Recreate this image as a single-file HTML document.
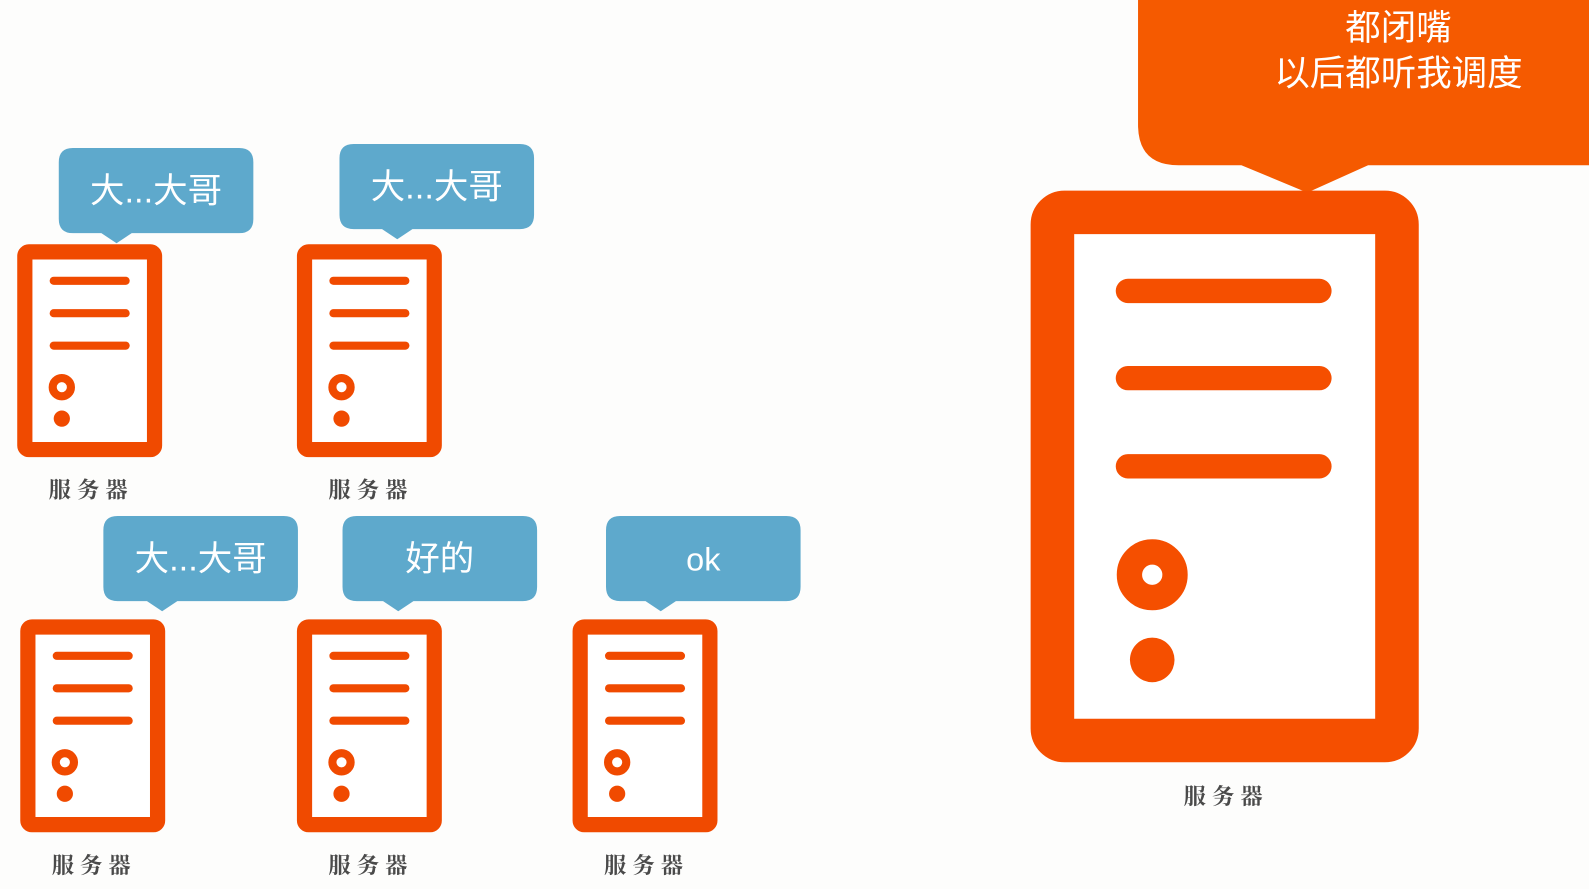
<!DOCTYPE html>
<html><head><meta charset="utf-8"><style>
html,body{margin:0;padding:0;background:#fdfdfc;width:1589px;height:889px;overflow:hidden}
svg{display:block}
.bt{font-family:"Liberation Sans","Noto Sans CJK SC",sans-serif;font-size:34px;fill:#fff;text-anchor:middle}
.lb{font-family:"Noto Serif CJK SC","Liberation Serif",serif;font-weight:bold;font-size:22px;fill:#4a4a4a;text-anchor:middle;letter-spacing:6px}
</style></head><body>
<svg width="1589" height="889" viewBox="0 0 1568 877" preserveAspectRatio="none" xmlns="http://www.w3.org/2000/svg">
<defs>
<g id="srv">
<rect x="7.5" y="7.5" width="128" height="195" rx="4" fill="#fff" stroke="#f04a00" stroke-width="15"/>
<g stroke="#f04a00" stroke-width="8" stroke-linecap="round">
<line x1="36" y1="36" x2="107" y2="36"/><line x1="36" y1="68" x2="107" y2="68"/><line x1="36" y1="100" x2="107" y2="100"/>
</g>
<circle cx="44" cy="141" r="9" fill="none" stroke="#f04a00" stroke-width="8"/>
<circle cx="44" cy="172" r="8" fill="#f04a00"/>
</g>
</defs>
<path d="M1123 0 H1568 V163 H1350 L1290 190 L1225 163 H1163 Q1123 163 1123 123 Z" fill="#f55a00"/>
<text x="1380" y="39" class="bt" style="font-size:35px">都闭嘴</text>
<text x="1380" y="84" class="bt" style="font-size:35px">以后都听我调度</text>
<rect x="1038.5" y="209.5" width="340" height="521" rx="12" fill="#fff" stroke="#f54f00" stroke-width="43"/>
<g stroke="#f54f00" stroke-width="24" stroke-linecap="round">
<line x1="1113" y1="287" x2="1302" y2="287"/><line x1="1113" y1="373" x2="1302" y2="373"/><line x1="1113" y1="460" x2="1302" y2="460"/>
</g>
<circle cx="1137" cy="567" r="22.5" fill="none" stroke="#f54f00" stroke-width="25"/>
<circle cx="1137" cy="651" r="22" fill="#f54f00"/>
<text x="1210" y="793" class="lb">服务器</text>
<use href="#srv" x="17" y="241"/><text x="90" y="491" class="lb">服务器</text>
<use href="#srv" x="293" y="241"/><text x="366" y="491" class="lb">服务器</text>
<use href="#srv" x="20" y="611"/><text x="93" y="861" class="lb">服务器</text>
<use href="#srv" x="293" y="611"/><text x="366" y="861" class="lb">服务器</text>
<use href="#srv" x="565" y="611"/><text x="638" y="861" class="lb">服务器</text>
<path d="M72 146 H236 Q250 146 250 160 V216 Q250 230 236 230 H130 L115 240 L100 230 H72 Q58 230 58 216 V160 Q58 146 72 146Z" fill="#5ea9cc"/>
<text x="154" y="200" class="bt">大...大哥</text>
<path d="M349 142 H513 Q527 142 527 156 V212 Q527 226 513 226 H407 L392 236 L377 226 H349 Q335 226 335 212 V156 Q335 142 349 142Z" fill="#5ea9cc"/>
<text x="431" y="196" class="bt">大...大哥</text>
<path d="M116 509 H280 Q294 509 294 523 V579 Q294 593 280 593 H175 L160 603 L145 593 H116 Q102 593 102 579 V523 Q102 509 116 509Z" fill="#5ea9cc"/>
<text x="198" y="563" class="bt">大...大哥</text>
<path d="M352 509 H516 Q530 509 530 523 V579 Q530 593 516 593 H408 L393 603 L378 593 H352 Q338 593 338 579 V523 Q338 509 352 509Z" fill="#5ea9cc"/>
<text x="434" y="563" class="bt">好的</text>
<path d="M612 509 H776 Q790 509 790 523 V579 Q790 593 776 593 H667 L652 603 L637 593 H612 Q598 593 598 579 V523 Q598 509 612 509Z" fill="#5ea9cc"/>
<text x="694" y="563" class="bt" style="font-size:32px">ok</text>
</svg>
</body></html>
